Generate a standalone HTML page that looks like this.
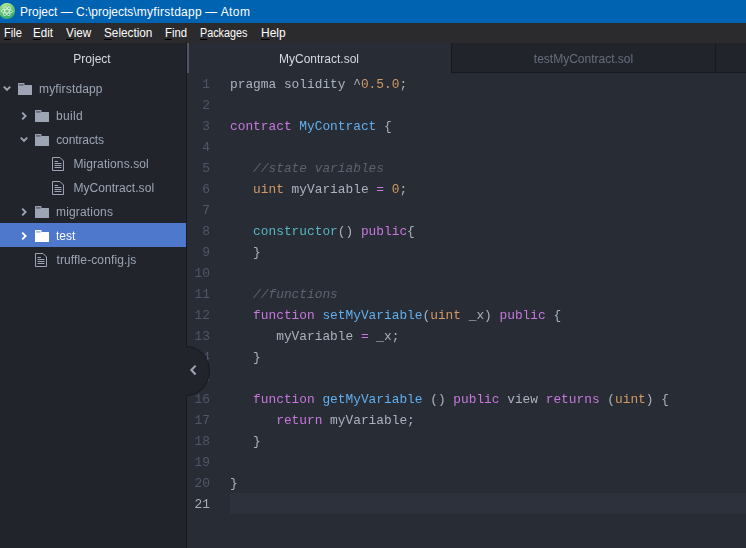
<!DOCTYPE html>
<html>
<head>
<meta charset="utf-8">
<title>Project — C:\projects\myfirstdapp — Atom</title>
<style>
html,body{margin:0;padding:0;}
body{width:746px;height:548px;overflow:hidden;position:relative;background:#282c34;font-family:"Liberation Sans",sans-serif;font-size:12px;}
.abs{position:absolute;}
.gs{will-change:transform;}
#title{left:0;top:0;width:746px;height:23px;background:#0063b1;}
#title .t{position:absolute;left:20px;top:1px;height:23px;line-height:23px;color:#fff;font-size:12px;white-space:pre;}
#menu{left:0;top:23px;width:746px;height:20px;background:#2b2b2d;}
#menu span{position:absolute;top:1px;height:19px;line-height:19px;transform-origin:0 50%;color:#fff;font-size:12px;white-space:pre;}
#menu span u{text-decoration:none;display:inline-block;position:relative;line-height:19px;}
#menu span u:after{content:"";position:absolute;left:0;right:0;top:15px;height:1px;background:#000;}
#side{left:0;top:43px;width:186px;height:505px;background:#21252b;}
#sep{left:186px;top:43px;width:1px;height:505px;background:#181a1f;}
#tabbar{left:187px;top:43px;width:559px;height:30px;background:#21252b;}
#tabbar .bb{position:absolute;left:264px;right:0;top:29px;height:1px;background:#181a1f;}
.tab{position:absolute;top:0;height:30px;line-height:32px;text-align:center;font-size:12px;white-space:pre;}
#tab1{left:0;width:264px;color:#d7dae0;}
#tab2t{left:264px;width:265px;color:#676e7b;}
#tab2{left:264px;width:263px;border-left:1px solid #181a1f;border-right:1px solid #181a1f;height:29px;}
#ptitle{left:-1px;top:44px;width:186px;height:30px;line-height:30px;text-align:center;color:#d7dae0;font-size:12px;}
.row{position:absolute;left:0;width:186px;height:24px;line-height:24px;color:#9da5b4;font-size:12px;white-space:pre;}
.row.sel{color:#fff;}
#selbg{left:0;top:223px;width:186px;height:24px;background:#4d78cc;}
#fg{left:0;top:0;width:746px;height:548px;will-change:transform;}
#tab1bg{left:187px;top:43px;width:264px;height:30px;background:#282c34;}
#tab1bg:before{content:"";position:absolute;left:0;top:0;width:2px;height:30px;background:#4e5461;}
.row .lbl{position:absolute;top:0;}
.row svg{position:absolute;}
#gutter{left:187px;top:73px;width:43px;height:475px;}
.ln{position:absolute;right:20px;height:21px;line-height:23px;color:#4e5668;font-family:"Liberation Mono",monospace;font-size:12.83px;white-space:pre;}
#code{left:230px;top:73px;width:516px;height:475px;}
.cl{position:absolute;left:0;height:21px;line-height:23px;color:#abb2bf;font-family:"Liberation Mono",monospace;font-size:12.83px;white-space:pre;}
.k{color:#c678dd}.b{color:#61afef}.o{color:#d19a66}.c{color:#56b6c2}.cm{color:#5c6370;font-style:italic}
#curline{left:230px;top:493px;width:516px;height:21px;background:#2c313c;}
#handle{left:162px;top:346px;width:48px;height:50px;border-radius:50%;background:#21252b;border:1px solid #181a1f;box-sizing:border-box;}
#handleclip{left:186px;top:340px;width:40px;height:60px;overflow:hidden;}
</style>
</head>
<body>
<div id="title" class="abs">
<svg class="abs" style="left:0;top:3px" width="16" height="17" viewBox="0 0 16 17">
<defs><linearGradient id="ag" x1="0.3" y1="0" x2="0.6" y2="1"><stop offset="0" stop-color="#b9ea90"/><stop offset="0.4" stop-color="#6fca7e"/><stop offset="1" stop-color="#33a868"/></linearGradient></defs>
<circle cx="7" cy="8" r="8.1" fill="url(#ag)"/>
<g fill="none" stroke="#fff" stroke-opacity="0.75" stroke-width="0.8" transform="translate(7 8.2) scale(1 0.86) rotate(3)">
<ellipse cx="0" cy="0" rx="5.9" ry="2.1" transform="rotate(62)"/>
<ellipse cx="0" cy="0" rx="5.9" ry="2.1" transform="rotate(-62)"/>
<ellipse cx="0" cy="0" rx="5.9" ry="2.1"/>
</g>
</svg>
<div class="t">Project — C:\projects\<span style="letter-spacing:0.3px">myfirstdapp</span> — <span style="letter-spacing:0.4px">Atom</span></div>
</div>
<div id="menu" class="abs">
<span style="left:4px;transform:scaleX(0.92)"><u>F</u>ile</span>
<span style="left:33px;transform:scaleX(0.965)"><u>E</u>dit</span>
<span style="left:66px;transform:scaleX(0.97)"><u>V</u>iew</span>
<span style="left:104px;transform:scaleX(0.98)"><u>S</u>election</span>
<span style="left:165px;transform:scaleX(0.94)"><u>F</u>ind</span>
<span style="left:200px;transform:scaleX(0.9)"><u>P</u>ackages</span>
<span style="left:261px;transform:scaleX(1)"><u>H</u>elp</span>
</div>

<div id="side" class="abs"></div>
<div id="sep" class="abs"></div>

<div id="tabbar" class="abs">
<div class="bb"></div>
<div id="tab2" class="tab"></div>
</div>
<div id="tab1bg" class="abs"></div>
<div id="selbg" class="abs"></div>
<div id="curline" class="abs"></div>

<div id="fg" class="abs">
<div id="ptitle" class="abs">Project</div>
<div class="abs" style="left:187px;top:43px;width:559px;height:30px">
<div id="tab1" class="tab">MyContract.sol</div>
<div id="tab2t" class="tab">testMyContract.sol</div>
</div>

<!-- tree -->
<div class="row" style="top:77px">
<svg style="left:3.4px;top:8px" width="8" height="8" viewBox="0 0 8 8"><path d="M0.8 1.6 L4 4.8 L7.2 1.6" fill="none" stroke="#9da5b4" stroke-width="1.9"/></svg>
<svg style="left:18px;top:6px" width="14" height="12" viewBox="0 0 14 12"><path d="M0 1 Q0 0 0.6 0 H5.9 Q6.5 0 6.5 0.6 V2 H13.4 Q14 2 14 2.6 V11.4 Q14 12 13.4 12 H0.6 Q0 12 0 11.4 Z" fill="#9da5b4"/><rect x="0.9" y="1.5" width="4.8" height="0.9" fill="#21252b" fill-opacity="0.85"/></svg>
<span class="lbl" style="left:39px;letter-spacing:0.15px">myfirstdapp</span></div>

<div class="row" style="top:104px">
<svg style="left:21.3px;top:6.5px" width="7" height="10" viewBox="0 0 7 10"><path d="M1.2 1.6 L4.6 5 L1.2 8.4" fill="none" stroke="#9da5b4" stroke-width="1.9"/></svg>
<svg style="left:35px;top:6px" width="14" height="12" viewBox="0 0 14 12"><path d="M0 1 Q0 0 0.6 0 H5.9 Q6.5 0 6.5 0.6 V2 H13.4 Q14 2 14 2.6 V11.4 Q14 12 13.4 12 H0.6 Q0 12 0 11.4 Z" fill="#9da5b4"/><rect x="0.9" y="1.5" width="4.8" height="0.9" fill="#21252b" fill-opacity="0.85"/></svg>
<span class="lbl" style="left:56px;letter-spacing:0.3px">build</span></div>

<div class="row" style="top:128px">
<svg style="left:20.4px;top:8px" width="8" height="8" viewBox="0 0 8 8"><path d="M0.8 1.6 L4 4.8 L7.2 1.6" fill="none" stroke="#9da5b4" stroke-width="1.9"/></svg>
<svg style="left:35px;top:6px" width="14" height="12" viewBox="0 0 14 12"><path d="M0 1 Q0 0 0.6 0 H5.9 Q6.5 0 6.5 0.6 V2 H13.4 Q14 2 14 2.6 V11.4 Q14 12 13.4 12 H0.6 Q0 12 0 11.4 Z" fill="#9da5b4"/><rect x="0.9" y="1.5" width="4.8" height="0.9" fill="#21252b" fill-opacity="0.85"/></svg>
<span class="lbl" style="left:56.2px;letter-spacing:-0.1px">contracts</span></div>

<div class="row" style="top:152px">
<svg style="left:52px;top:5px" width="12" height="14" viewBox="0 0 12 14"><path d="M0.5 0.5 H8 L11.5 4 V13.5 H0.5 Z" fill="none" stroke="#9da5b4" stroke-width="1"/><path d="M2.5 4.5 H6 M2.5 6.5 H9.5 M2.5 8.5 H9.5 M2.5 10.5 H9.5" stroke="#9da5b4" stroke-width="1"/></svg>
<span class="lbl" style="left:73.4px;letter-spacing:0.1px">Migrations.sol</span></div>

<div class="row" style="top:176px">
<svg style="left:52px;top:5px" width="12" height="14" viewBox="0 0 12 14"><path d="M0.5 0.5 H8 L11.5 4 V13.5 H0.5 Z" fill="none" stroke="#9da5b4" stroke-width="1"/><path d="M2.5 4.5 H6 M2.5 6.5 H9.5 M2.5 8.5 H9.5 M2.5 10.5 H9.5" stroke="#9da5b4" stroke-width="1"/></svg>
<span class="lbl" style="left:73.4px;letter-spacing:0.05px">MyContract.sol</span></div>

<div class="row" style="top:200px">
<svg style="left:21.3px;top:6.5px" width="7" height="10" viewBox="0 0 7 10"><path d="M1.2 1.6 L4.6 5 L1.2 8.4" fill="none" stroke="#9da5b4" stroke-width="1.9"/></svg>
<svg style="left:35px;top:6px" width="14" height="12" viewBox="0 0 14 12"><path d="M0 1 Q0 0 0.6 0 H5.9 Q6.5 0 6.5 0.6 V2 H13.4 Q14 2 14 2.6 V11.4 Q14 12 13.4 12 H0.6 Q0 12 0 11.4 Z" fill="#9da5b4"/><rect x="0.9" y="1.5" width="4.8" height="0.9" fill="#21252b" fill-opacity="0.85"/></svg>
<span class="lbl" style="left:56px;letter-spacing:0.17px">migrations</span></div>

<div class="row sel" style="top:223px">
<svg style="left:21.3px;top:7.5px" width="7" height="10" viewBox="0 0 7 10"><path d="M1.2 1.6 L4.6 5 L1.2 8.4" fill="none" stroke="#fff" stroke-width="1.9"/></svg>
<svg style="left:35px;top:7px" width="14" height="12" viewBox="0 0 14 12"><path d="M0 1 Q0 0 0.6 0 H5.9 Q6.5 0 6.5 0.6 V2 H13.4 Q14 2 14 2.6 V11.4 Q14 12 13.4 12 H0.6 Q0 12 0 11.4 Z" fill="#fff"/><rect x="0.9" y="1.5" width="4.8" height="0.9" fill="#4d78cc" fill-opacity="0.85"/></svg>
<span class="lbl" style="left:56px;top:1px">test</span></div>

<div class="row" style="top:248px">
<svg style="left:35px;top:5px" width="12" height="14" viewBox="0 0 12 14"><path d="M0.5 0.5 H8 L11.5 4 V13.5 H0.5 Z" fill="none" stroke="#9da5b4" stroke-width="1"/><path d="M2.5 4.5 H6 M2.5 6.5 H9.5 M2.5 8.5 H9.5 M2.5 10.5 H9.5" stroke="#9da5b4" stroke-width="1"/></svg>
<span class="lbl" style="left:56.5px;letter-spacing:0.12px">truffle-config.js</span></div>

<!-- editor -->
<div id="gutter" class="abs">
<div class="ln" style="top:0px">1</div>
<div class="ln" style="top:21px">2</div>
<div class="ln" style="top:42px">3</div>
<div class="ln" style="top:63px">4</div>
<div class="ln" style="top:84px">5</div>
<div class="ln" style="top:105px">6</div>
<div class="ln" style="top:126px">7</div>
<div class="ln" style="top:147px">8</div>
<div class="ln" style="top:168px">9</div>
<div class="ln" style="top:189px">10</div>
<div class="ln" style="top:210px">11</div>
<div class="ln" style="top:231px">12</div>
<div class="ln" style="top:252px">13</div>
<div class="ln" style="top:273px">14</div>
<div class="ln" style="top:294px">15</div>
<div class="ln" style="top:315px">16</div>
<div class="ln" style="top:336px">17</div>
<div class="ln" style="top:357px">18</div>
<div class="ln" style="top:378px">19</div>
<div class="ln" style="top:399px">20</div>
<div class="ln" style="top:420px;color:#a6adba">21</div>
</div>
<div id="code" class="abs">
<div class="cl" style="top:0px">pragma solidity ^<span class="o">0.5.0</span>;</div>
<div class="cl" style="top:42px"><span class="k">contract</span> <span class="b">MyContract</span> {</div>
<div class="cl" style="top:84px">   <span class="cm">//state variables</span></div>
<div class="cl" style="top:105px">   <span class="o">uint</span> myVariable <span class="k">=</span> <span class="o">0</span>;</div>
<div class="cl" style="top:147px">   <span class="c">constructor</span>() <span class="k">public</span>{</div>
<div class="cl" style="top:168px">   }</div>
<div class="cl" style="top:210px">   <span class="cm">//functions</span></div>
<div class="cl" style="top:231px">   <span class="k">function</span> <span class="b">setMyVariable</span>(<span class="o">uint</span> _x) <span class="k">public</span> {</div>
<div class="cl" style="top:252px">      myVariable <span class="k">=</span> _x;</div>
<div class="cl" style="top:273px">   }</div>
<div class="cl" style="top:315px">   <span class="k">function</span> <span class="b">getMyVariable</span> () <span class="k">public</span> view <span class="k">returns</span> (<span class="o">uint</span>) {</div>
<div class="cl" style="top:336px">      <span class="k">return</span> myVariable;</div>
<div class="cl" style="top:357px">   }</div>
<div class="cl" style="top:399px">}</div>
</div>

</div>
<!-- dock toggle handle -->
<div id="handleclip" class="abs"><div id="handle" class="abs" style="left:-24px;top:6px"></div>
<svg class="abs" style="left:3px;top:24px" width="9" height="12" viewBox="0 0 9 12"><path d="M6.6 1.6 L2.4 6 L6.6 10.4" fill="none" stroke="#9da5b4" stroke-width="2.1"/></svg>
</div>
</body>
</html>
